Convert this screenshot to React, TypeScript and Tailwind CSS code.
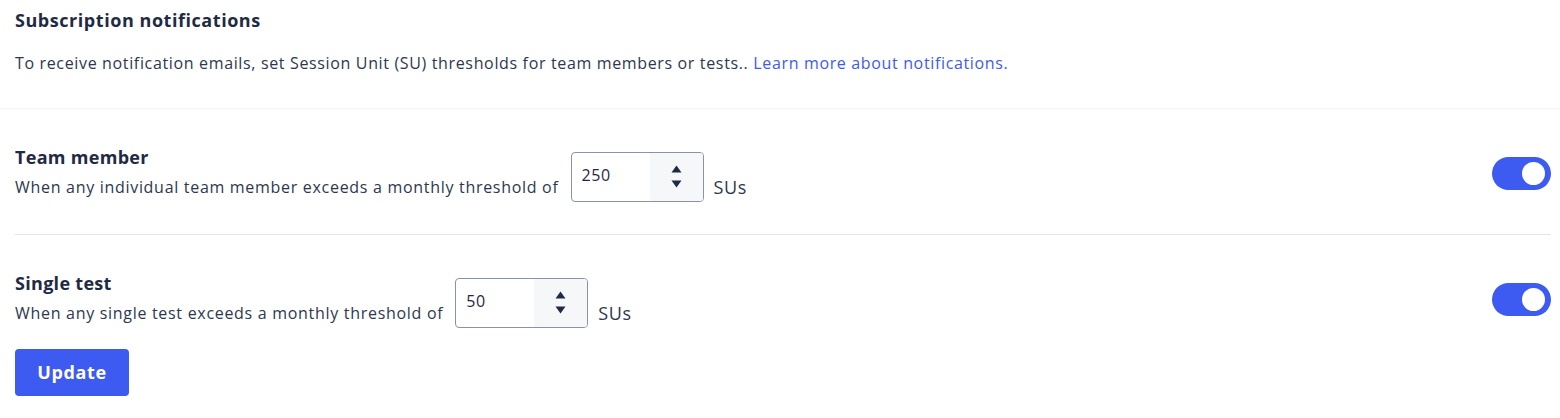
import { useState } from "react";

const FONT = "font-['Open_Sans',_'Liberation_Sans',_sans-serif]";

function Stepper({ value, onChange }: { value: number; onChange: (v: number) => void }) {
  return (
    <div className="flex h-[50px] w-[133px] overflow-hidden rounded-[4px] border border-[#8a93a6] bg-white">
      <input
        value={value}
        onChange={(e) => onChange(Number(e.target.value) || 0)}
        className="w-[78px] pl-[10px] pb-[4px] text-[16px] tracking-[0.6px] text-[#1f2a44] outline-none"
      />
      <div className="flex flex-1 flex-col items-center justify-center gap-[7px] bg-[#f6f7f9] pb-[2px]">
        <button onClick={() => onChange(value + 1)} aria-label="Increase">
          <svg width="11" height="8" viewBox="0 0 11 8">
            <path d="M5.5 0.5 L10.5 7.5 L0.5 7.5 Z" fill="#1f2a44" />
          </svg>
        </button>
        <button onClick={() => onChange(Math.max(0, value - 1))} aria-label="Decrease">
          <svg width="11" height="8" viewBox="0 0 11 8">
            <path d="M0.5 0.5 L10.5 0.5 L5.5 7.5 Z" fill="#1f2a44" />
          </svg>
        </button>
      </div>
    </div>
  );
}

function Toggle({ on, onToggle }: { on: boolean; onToggle: () => void }) {
  return (
    <button
      onClick={onToggle}
      className={
        "flex h-[33px] w-[59px] items-center rounded-full px-[6px] " +
        (on ? "justify-end bg-[#3d5af1]" : "justify-start bg-[#c5cad6]")
      }
      aria-label="Toggle"
    >
      <span className="h-[23px] w-[23px] rounded-full bg-white" />
    </button>
  );
}

interface RowProps {
  title: string;
  text: string;
  value: number;
  onValue: (v: number) => void;
  on: boolean;
  onToggle: () => void;
}

function ThresholdRow({ title, text, value, onValue, on, onToggle }: RowProps) {
  return (
    <div className="flex items-center justify-between">
      <div className="flex items-end">
        <div className="pb-[3px]">
          <div className="text-[18px] leading-[24px] font-bold tracking-[0.3px] text-[#1f2a44]">{title}</div>
          <div className="mt-[6px] text-[16px] leading-[24px] tracking-[0.7px] text-[#2d3750]">{text}</div>
        </div>
        <div className="ml-[12px]">
          <Stepper value={value} onChange={onValue} />
        </div>
        <div className="ml-[10px] pb-[3px] text-[18px] leading-[24px] tracking-[0.6px] text-[#2d3750]">SUs</div>
      </div>
      <Toggle on={on} onToggle={onToggle} />
    </div>
  );
}

export default function App() {
  const [member, setMember] = useState(250);
  const [single, setSingle] = useState(50);
  const [memberOn, setMemberOn] = useState(true);
  const [singleOn, setSingleOn] = useState(true);

  return (
    <div className={`${FONT} h-[418px] w-[1560px] bg-white`}>
      {/* Header */}
      <div className="border-b border-[#f2f3f5] px-[15px] pt-[8px] pb-[33px]">
        <h2 className="text-[18px] leading-[24px] font-bold tracking-[0.55px] text-[#1f2a44]">Subscription notifications</h2>
        <p className="mt-[19px] text-[16px] leading-[24px] tracking-[0.65px] text-[#2d3750]">
          To receive notification emails, set Session Unit (SU) thresholds for team members or tests..{" "}
          <a href="#" className="text-[#3d5af1]">
            Learn more about notifications.
          </a>
        </p>
      </div>

      <div className="pl-[15px] pr-[9px] pt-[36px]">
        <ThresholdRow
          title="Team member"
          text="When any individual team member exceeds a monthly threshold of"
          value={member}
          onValue={setMember}
          on={memberOn}
          onToggle={() => setMemberOn(!memberOn)}
        />
        <div className="mt-[32px] border-t border-[#e3e5ea]" />
        <div className="pt-[36px]">
          <ThresholdRow
            title="Single test"
            text="When any single test exceeds a monthly threshold of"
            value={single}
            onValue={setSingle}
            on={singleOn}
            onToggle={() => setSingleOn(!singleOn)}
          />
        </div>
        <button className="mt-[21px] h-[47px] w-[114px] rounded-[4px] bg-[#3d5af1] text-[18px] font-bold tracking-[0.6px] text-white">
          Update
        </button>
      </div>
    </div>
  );
}
